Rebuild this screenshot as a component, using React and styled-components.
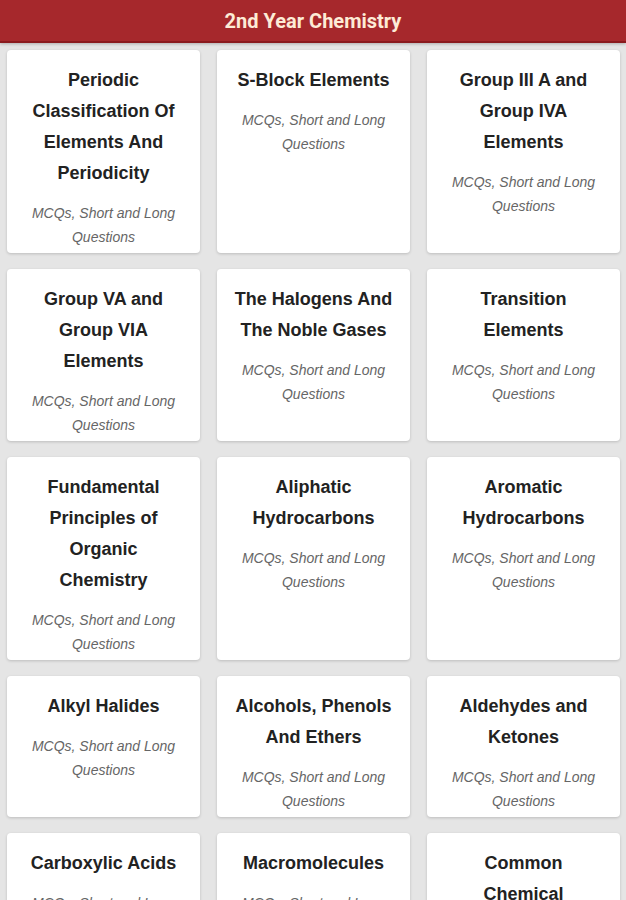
import React from "react";
import styled, { createGlobalStyle } from "styled-components";

const Global = createGlobalStyle`
  html, body { margin: 0; padding: 0; background: #e5e5e5; }
  body { font-family: "Liberation Sans", Arial, sans-serif; }
`;

const Page = styled.div`
  min-height: 900px;
  background: #e5e5e5;
  font-family: "Liberation Sans", Arial, sans-serif;
`;

const Header = styled.header`
  height: 41px;
  background: #a6282c;
  border-bottom: 2px solid #8a1a1e;
  box-shadow: 0 1px 3px rgba(0,0,0,0.25);
  display: flex;
  align-items: center;
  justify-content: center;
`;

const HeaderTitle = styled.h1`
  margin: 0;
  font-family: Roboto, "Noto Sans", sans-serif;
  font-weight: 700;
  font-size: 20px;
  color: #fdebd6;
`;

const Grid = styled.main`
  display: grid;
  grid-template-columns: repeat(3, 1fr);
  column-gap: 17px;
  row-gap: 16.6px;
  padding: 7px 6px 8px 7px;
`;

const Card = styled.div`
  background: #ffffff;
  border-radius: 4px;
  box-shadow: 0 1px 3px rgba(0,0,0,0.18);
  padding: 15px 16px 3.5px;
  text-align: center;
`;

const Title = styled.h2`
  margin: 0;
  font-family: "Liberation Sans", Arial, sans-serif;
  font-size: 18px;
  font-weight: 700;
  line-height: 31px;
  color: #222222;
`;

const Subtitle = styled.p`
  margin: 12px 0 0;
  font-family: "Liberation Sans", Arial, sans-serif;
  font-size: 14px;
  font-style: italic;
  line-height: 24px;
  color: #666666;
`;

const chapters = [
  "Periodic Classification Of Elements And Periodicity",
  "S-Block Elements",
  "Group III A and Group IVA Elements",
  "Group VA and Group VIA Elements",
  "The Halogens And The Noble Gases",
  "Transition Elements",
  "Fundamental Principles of Organic Chemistry",
  "Aliphatic Hydrocarbons",
  "Aromatic Hydrocarbons",
  "Alkyl Halides",
  "Alcohols, Phenols And Ethers",
  "Aldehydes and Ketones",
  "Carboxylic Acids",
  "Macromolecules",
  "Common Chemical Industries in Pakistan",
  "Environmental Chemistry",
];

export default function App() {
  return (
    <Page>
      <Global />
      <Header>
        <HeaderTitle>2nd Year Chemistry</HeaderTitle>
      </Header>
      <Grid>
        {chapters.map((c) => (
          <Card key={c}>
            <Title>{c}</Title>
            <Subtitle>MCQs, Short and Long Questions</Subtitle>
          </Card>
        ))}
      </Grid>
    </Page>
  );
}
